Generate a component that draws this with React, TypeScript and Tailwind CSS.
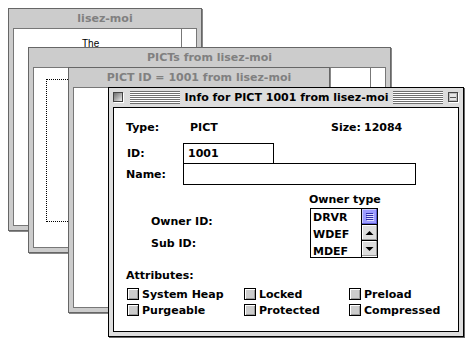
import React from "react";

function InactiveWindow({
  className,
  title,
  children,
}: {
  className: string;
  title: string;
  children?: React.ReactNode;
}) {
  return (
    <div
      className={`absolute flex flex-col border border-[#666] bg-[#cccccc] px-[4px] pb-[4px] shadow-[1px_1px_0_#888] ${className}`}
    >
      <div className="h-[19px] shrink-0 overflow-hidden whitespace-nowrap text-center text-[11px] font-bold leading-[19px] text-[#808080]">
        {title}
      </div>
      <div className="flex min-h-0 flex-1 overflow-hidden border border-[#777] bg-white">{children}</div>
    </div>
  );
}

function CloseBox() {
  return (
    <svg width="11" height="11" viewBox="0 0 11 11" className="shrink-0">
      <defs>
        <linearGradient id="cbg" x1="0" y1="0" x2="1" y2="1">
          <stop offset="0" stopColor="#6f6f6f" />
          <stop offset="0.5" stopColor="#aaaaaa" />
          <stop offset="1" stopColor="#eeeeee" />
        </linearGradient>
      </defs>
      <rect x="1" y="1" width="10" height="10" fill="#ffffff" />
      <rect x="0" y="0" width="10" height="10" fill="#444" />
      <rect x="1" y="1" width="8" height="8" fill="url(#cbg)" />
    </svg>
  );
}

function ZoomBox() {
  return (
    <svg width="11" height="11" viewBox="0 0 11 11" className="shrink-0">
      <rect x="1" y="1" width="10" height="10" fill="#ffffff" />
      <rect x="0" y="0" width="10" height="10" fill="#444" />
      <rect x="1" y="1" width="8" height="8" fill="#bdbdbd" />
      <rect x="2" y="2" width="6" height="3" fill="#e6e6e6" />
      <rect x="2" y="5" width="6" height="1" fill="#555" />
      <rect x="2" y="6" width="6" height="2" fill="#e6e6e6" />
    </svg>
  );
}

function Stripes() {
  return (
    <div className="h-[13px] min-w-0 flex-1 bg-[image:repeating-linear-gradient(to_bottom,#6e6e6e_0px,#6e6e6e_1px,#ffffff_1px,#ffffff_2px)]" />
  );
}

function Check({ label }: { label: string }) {
  return (
    <div className="flex h-[16px] items-center gap-[3px]">
      <span className="block h-[12px] w-[12px] shrink-0 border border-black bg-[#cccccc] shadow-[inset_1px_1px_0_#ffffff,inset_-1px_-1px_0_#999999]" />
      <span className="whitespace-nowrap">{label}</span>
    </div>
  );
}

function Thumb() {
  return (
    <svg width="15" height="15" viewBox="0 0 15 15" className="block">
      <rect x="0" y="0" width="15" height="15" fill="#8f8fff" />
      <rect x="0" y="0" width="15" height="1" fill="#ccccff" />
      <rect x="0" y="0" width="1" height="15" fill="#ccccff" />
      <rect x="1" y="1" width="13" height="13" fill="#9c9cff" />
      <rect x="14" y="0" width="1" height="15" fill="#5c5cd6" />
      <rect x="0" y="14" width="15" height="1" fill="#5c5cd6" />
      {[4, 6, 8, 10].map((y) => (
        <g key={y}>
          <rect x="4" y={y} width="7" height="1" fill="#3333aa" />
          <rect x="5" y={y + 1} width="7" height="1" fill="#ddddff" />
        </g>
      ))}
    </svg>
  );
}

function Arrow({ up }: { up: boolean }) {
  return (
    <svg width="15" height="15" viewBox="0 0 15 15" className="block">
      <rect x="0" y="0" width="15" height="15" fill="#dddddd" />
      <rect x="0" y="0" width="15" height="1" fill="#ffffff" />
      <rect x="0" y="0" width="1" height="15" fill="#ffffff" />
      <rect x="14" y="0" width="1" height="15" fill="#999999" />
      <rect x="0" y="14" width="15" height="1" fill="#999999" />
      {up ? (
        <polygon points="3.5,10 11.5,10 7.5,6" fill="#000" />
      ) : (
        <polygon points="3.5,6 11.5,6 7.5,10" fill="#000" />
      )}
    </svg>
  );
}

export default function App() {
  return (
    <div className="relative h-[358px] w-[476px] overflow-hidden bg-white font-['DejaVu_Sans',sans-serif]">
      {/* Window 1 */}
      <InactiveWindow className="left-[8px] top-[8px] h-[223px] w-[194px]" title="lisez-moi">
        <div className="flex-1 pl-[68px] pt-[9px] font-['Liberation_Sans',sans-serif] text-[10px] leading-[12px] text-black">
          The
        </div>
        <div className="w-[15px] shrink-0 border-l border-[#777]" />
      </InactiveWindow>

      {/* Window 2 */}
      <InactiveWindow className="left-[28px] top-[47px] h-[206px] w-[363px]" title="PICTs from lisez-moi">
        <div className="min-w-0 flex-1 pl-[12px] pt-[11px]">
          <div className="h-[143px] w-[280px] border border-dotted border-black" />
        </div>
        <div className="w-[15px] shrink-0 border-l border-[#777]" />
      </InactiveWindow>

      {/* Window 3 */}
      <InactiveWindow
        className="left-[68px] top-[67px] h-[246px] w-[262px]"
        title="PICT ID = 1001 from lisez-moi"
      >
        <div className="flex-1" />
      </InactiveWindow>

      {/* Window 4 - active */}
      <div className="absolute left-[108px] top-[87px] flex h-[250px] w-[356px] flex-col border border-black bg-[#dddddd] px-[4px] pb-[4px] shadow-[1px_1px_0_#666] text-[11px] font-bold text-black">
        <div className="flex h-[19px] shrink-0 items-center">
          <CloseBox />
          <div className="w-[6px] shrink-0" />
          <Stripes />
          <div className="shrink-0 whitespace-nowrap px-[4px] leading-[19px]">Info for PICT 1001 from lisez-moi</div>
          <Stripes />
          <div className="w-[5px] shrink-0" />
          <ZoomBox />
        </div>
        <div className="flex min-h-0 flex-1 flex-col border border-black bg-white pl-[12px] pt-[13px] leading-[13px]">
          <div className="flex h-[13px] whitespace-nowrap">
            <span className="w-[64px]">Type:</span>
            <span className="w-[141px]">PICT</span>
            <span className="w-[33px]">Size:</span>
            <span>12084</span>
          </div>
          <div className="mt-[9px] flex items-center">
            <span className="w-[57px] pl-px">ID:</span>
            <div className="h-[21px] w-[91px] border border-black pl-[4px] leading-[19px]">1001</div>
          </div>
          <div className="-mt-px flex items-center">
            <span className="w-[57px]">Name:</span>
            <div className="h-[22px] w-[233px] border border-black" />
          </div>
          <div className="mt-[8px] flex">
            <div className="flex w-[183px] flex-col gap-[9px] pl-[25px] pt-[22px] whitespace-nowrap">
              <span>Owner ID:</span>
              <span>Sub ID:</span>
            </div>
            <div className="flex flex-col">
              <span className="whitespace-nowrap">Owner type</span>
              <div className="ml-px mt-[2px] flex h-[50px] w-[68px] border border-black">
                <div className="min-w-0 flex-1 overflow-hidden pl-[2px] leading-[17px]">
                  <div>DRVR</div>
                  <div>WDEF</div>
                  <div>MDEF</div>
                </div>
                <div className="flex w-[16px] shrink-0 flex-col border-l border-black">
                  <div className="h-[16px] border-b border-black">
                    <Thumb />
                  </div>
                  <div className="h-[16px] border-b border-black">
                    <Arrow up />
                  </div>
                  <div className="flex-1">
                    <Arrow up={false} />
                  </div>
                </div>
              </div>
            </div>
          </div>
          <div className="mt-[11px]">Attributes:</div>
          <div className="ml-px mt-[4px] grid grid-cols-[117px_105px_auto]">
            <Check label="System Heap" />
            <Check label="Locked" />
            <Check label="Preload" />
            <Check label="Purgeable" />
            <Check label="Protected" />
            <Check label="Compressed" />
          </div>
        </div>
      </div>
    </div>
  );
}
